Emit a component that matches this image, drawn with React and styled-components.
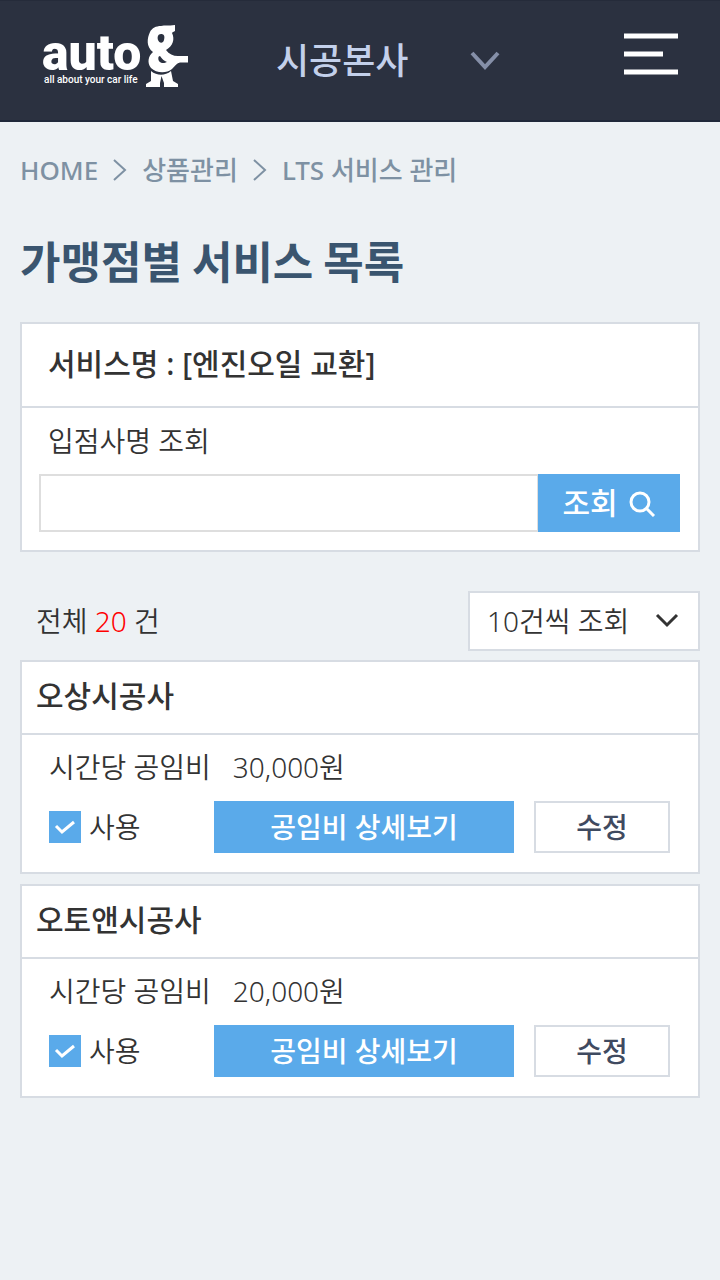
import React, { useState } from "react";
import styled, { createGlobalStyle } from "styled-components";

const GlobalStyle = createGlobalStyle`
  *, *::before, *::after { box-sizing: border-box; }
  body {
    margin: 0;
    background: #edf1f4;
    color: #333;
    font-family: "Noto Sans", "Noto Sans CJK KR", sans-serif;
    font-size: 28px;
    font-weight: 350;
    line-height: 40px;
  }
  button, input, select { font: inherit; color: inherit; border-radius: 0; margin: 0; }
  button { cursor: pointer; }
`;

const Header = styled.header`
  display: flex;
  align-items: center;
  height: 122px;
  padding: 0 42px;
  background: #2b3140;
  border-top: 1px solid #252b3a;
  border-bottom: 2px solid #20283a;
`;

const Logo = styled.a`
  display: flex;
  height: 64px;
  margin: 0 86px 8px 0;
  color: #fff;
  text-decoration: none;
`;

const LogoWords = styled.span`
  display: flex;
  flex-direction: column;
  width: 102px;
  padding-top: 8px;
  white-space: nowrap;
`;

const LogoName = styled.span`
  font-family: Roboto, sans-serif;
  font-size: 50px;
  font-weight: 900;
  line-height: 41px;
`;

const LogoTagline = styled.span`
  padding-left: 2px;
  font-family: Roboto, sans-serif;
  font-size: 10px;
  font-weight: 500;
  line-height: 12px;
`;

const SelectWrap = styled.div`
  position: relative;
  display: flex;
  align-items: center;

  svg {
    position: absolute;
    right: ${(p) => p.$inset || "0"};
    pointer-events: none;
  }
`;

const SiteSelect = styled.select`
  appearance: none;
  width: 224px;
  height: 60px;
  padding: 0 40px 0 0;
  border: 0;
  background: transparent;
  color: #c3d0eb;
  font-size: 36px;
  font-weight: 500;
`;

const CountSelect = styled.select`
  appearance: none;
  width: 232px;
  height: 60px;
  padding: 0 48px 0 17px;
  border: 2px solid #d7dce3;
  background: #fff;
`;

const MenuButton = styled.button`
  display: flex;
  padding: 0;
  margin: 0 0 14px auto;
  border: 0;
  background: none;
  color: #fff;
`;

const Main = styled.main`
  padding: 28px 20px;
`;

const Breadcrumb = styled.ol`
  display: flex;
  align-items: center;
  gap: 15px;
  margin: 0;
  padding: 0;
  list-style: none;
  color: #7e91a3;
  font-size: 26px;
  font-weight: 500;

  li { display: flex; align-items: center; gap: 15px; }
  a { color: inherit; text-decoration: none; }
`;

const Title = styled.h1`
  margin: 40px 0 32px;
  color: #3a556f;
  font-family: "Noto Sans CJK KR", sans-serif;
  font-size: 44px;
  font-weight: 700;
  line-height: 60px;
`;

const Panel = styled.section`
  border: 2px solid #d7dce3;
  background: #fff;
`;

const PanelTitle = styled.h2`
  margin: 0;
  padding: ${(p) => (p.$roomy ? "20px 26px 22px" : "14px 14px 17px")};
  border-bottom: 2px solid #d7dce3;
  font-size: 30px;
  font-weight: 500;
  line-height: 40px;
`;

const SearchForm = styled.form`
  padding: 13px 18px 18px 17px;
`;

const FieldLabel = styled.label`
  display: block;
  padding-left: 9px;
  margin-bottom: 13px;
`;

const SearchRow = styled.div`
  display: flex;
  height: 58px;
`;

const SearchInput = styled.input`
  flex: 1;
  min-width: 0;
  padding: 0 12px;
  border: 2px solid #dedede;
  border-right-width: 1px;
  background: #fff;
`;

const SearchButton = styled.button`
  display: flex;
  align-items: center;
  justify-content: center;
  gap: 10px;
  width: 142px;
  padding: 0;
  border: 0;
  background: #5aaaea;
  color: #fff;
  font-size: 30px;
  font-weight: 500;
`;

const ListBar = styled.div`
  display: flex;
  align-items: center;
  justify-content: space-between;
  margin: 39px 0 9px;
  padding-left: 16px;
`;

const Total = styled.p`
  margin: 0;
  em { color: #f00; font-style: normal; }
`;

const CardList = styled.div`
  display: flex;
  flex-direction: column;
  gap: 10px;
`;

const CardBody = styled.div`
  padding: 12px 28px 19px 27px;
`;

const Fee = styled.dl`
  display: flex;
  gap: 22px;
  margin: 0 0 14px;
  dd { margin: 0; }
`;

const Actions = styled.div`
  display: flex;
  align-items: center;
  gap: 20px;
`;

const UseLabel = styled.label`
  display: flex;
  align-items: center;
  gap: 8px;
  width: 145px;
`;

const CheckBox = styled.span`
  display: grid;
  width: 32px;
  height: 32px;

  input, svg { grid-area: 1 / 1; }
  svg { pointer-events: none; visibility: hidden; }
  input:checked + svg { visibility: visible; }
`;

const CheckInput = styled.input`
  appearance: none;
  width: 32px;
  height: 32px;
  border: 2px solid #5aaaea;
  background: #fff;
  &:checked { background: #5aaaea; }
`;

const DetailButton = styled.button`
  flex: 1;
  height: 52px;
  padding: 0;
  border: 0;
  background: #5aaaea;
  color: #fff;
  font-weight: 500;
`;

const EditButton = styled.button`
  width: 136px;
  height: 52px;
  padding: 0;
  border: 2px solid #d7dce3;
  background: #fff;
  color: #3f4a60;
  font-weight: 500;
`;

const Mascot = () => (
  <svg width="46" height="64" viewBox="0 0 46 64" fill="#fff" aria-hidden="true">
    <path
      fillRule="evenodd"
      d="M17 1C21 0 24 1 31 0V6C30 7 28 7 28 8C31 14 29 21 22 25C25 29 29 31 34 31H44V37.500H36C33 38 31 41 28 44C22 49 12 48 7 43C3 38 4 31 9 27C2 22 3 13 6 7C8 3 12 1 17 1ZM17 9C14 9 13 12 14 15C15 18 19 19 20 15C21 11 20 9 17 9ZM16 31C14 31 14 34 15 36C17 39 21 38 23 37C20 36 18 34 16 31Z"
    />
    <path d="M7 46C13 51 21 51 27 46L29 56L34 59V62H20V58L17.500 51L16 58V62H2V59L7 56Z" />
  </svg>
);

const Chevron = ({ width, height, stroke, strokeWidth }) => (
  <svg width={width} height={height} viewBox={`0 0 ${width} ${height}`} fill="none" aria-hidden="true">
    <path
      d={`M2 2L${width / 2} ${height - 4}L${width - 2} 2`}
      stroke={stroke}
      strokeWidth={strokeWidth}
    />
  </svg>
);

const Separator = () => (
  <svg width="14" height="22" viewBox="0 0 14 22" fill="none" aria-hidden="true">
    <path d="M1 1L12 11L1 21" stroke="#7e91a3" strokeWidth="2" />
  </svg>
);

const shops = [
  { name: "오상시공사", fee: "30,000원" },
  { name: "오토앤시공사", fee: "20,000원" },
];

function ShopCard({ name, fee }) {
  const [used, setUsed] = useState(true);
  return (
    <Panel>
      <PanelTitle>{name}</PanelTitle>
      <CardBody>
        <Fee>
          <dt>시간당 공임비</dt>
          <dd>{fee}</dd>
        </Fee>
        <Actions>
          <UseLabel>
            <CheckBox>
              <CheckInput type="checkbox" checked={used} onChange={(e) => setUsed(e.target.checked)} />
              <svg width="32" height="32" viewBox="0 0 32 32" fill="none" aria-hidden="true">
                <path d="M7 15L13 21L25 11" stroke="#fff" strokeWidth="3" />
              </svg>
            </CheckBox>
            사용
          </UseLabel>
          <DetailButton type="button">공임비 상세보기</DetailButton>
          <EditButton type="button">수정</EditButton>
        </Actions>
      </CardBody>
    </Panel>
  );
}

export default function App() {
  return (
    <>
      <GlobalStyle />
      <Header>
        <Logo href="#">
          <LogoWords>
            <LogoName>auto</LogoName>
            <LogoTagline>all about your car life</LogoTagline>
          </LogoWords>
          <Mascot />
        </Logo>
        <SelectWrap>
          <SiteSelect aria-label="시공본사">
            <option>시공본사</option>
          </SiteSelect>
          <Chevron width={30} height={20} stroke="#858fa8" strokeWidth={4} />
        </SelectWrap>
        <MenuButton type="button" aria-label="메뉴">
          <svg width="54" height="44" viewBox="0 0 54 44" aria-hidden="true">
            <path d="M0 4H54M0 22H39M0 40H54" stroke="currentColor" strokeWidth="5" />
          </svg>
        </MenuButton>
      </Header>
      <Main>
        <nav>
          <Breadcrumb>
            <li><a href="#">HOME</a></li>
            <li><Separator /><a href="#">상품관리</a></li>
            <li><Separator /><a href="#">LTS 서비스 관리</a></li>
          </Breadcrumb>
        </nav>
        <Title>가맹점별 서비스 목록</Title>
        <Panel>
          <PanelTitle $roomy>서비스명 : [엔진오일 교환]</PanelTitle>
          <SearchForm onSubmit={(e) => e.preventDefault()}>
            <FieldLabel htmlFor="shop-name">입점사명 조회</FieldLabel>
            <SearchRow>
              <SearchInput id="shop-name" type="text" />
              <SearchButton type="submit">
                조회
                <svg width="28" height="28" viewBox="0 0 28 28" fill="none" stroke="#fff" strokeWidth="3" aria-hidden="true">
                  <circle cx="12" cy="13" r="9" />
                  <path d="M18 19L26 27" />
                </svg>
              </SearchButton>
            </SearchRow>
          </SearchForm>
        </Panel>
        <ListBar>
          <Total>전체 <em>20</em> 건</Total>
          <SelectWrap $inset="21px">
            <CountSelect aria-label="조회 건수">
              <option>10건씩 조회</option>
            </CountSelect>
            <Chevron width={24} height={16} stroke="#333" strokeWidth={3} />
          </SelectWrap>
        </ListBar>
        <CardList>
          {shops.map((shop) => (
            <ShopCard key={shop.name} {...shop} />
          ))}
        </CardList>
      </Main>
    </>
  );
}
